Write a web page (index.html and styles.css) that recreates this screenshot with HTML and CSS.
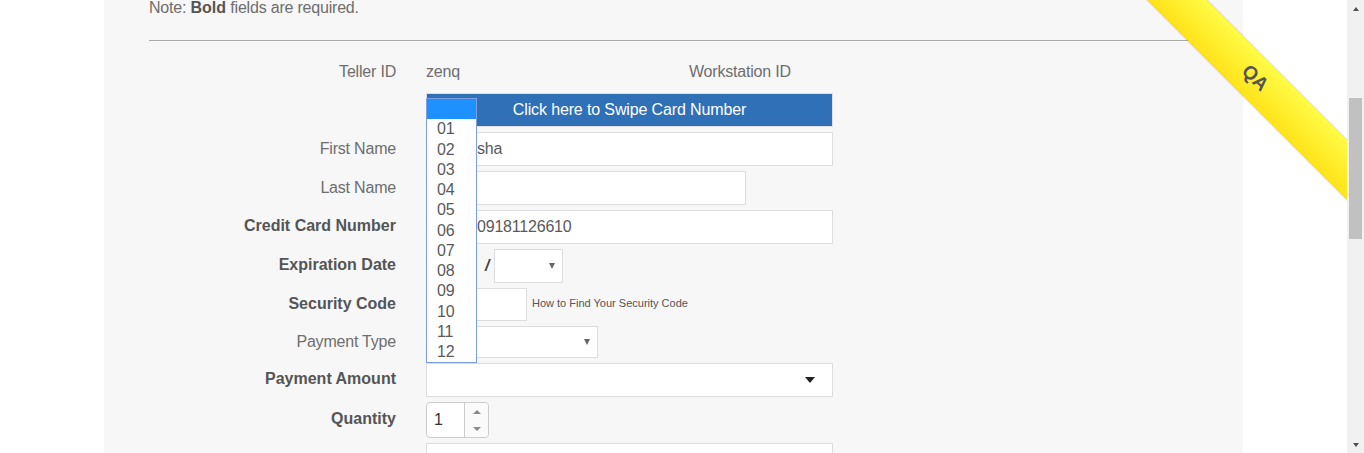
FILE: index.html
```html
<!DOCTYPE html>
<html>
<head>
<meta charset="utf-8">
<link rel="stylesheet" href="styles.css">
</head>
<body>
<div class="page">
  <div class="viewport">
    <div class="container">
      <p class="note">Note: <b>Bold</b> fields are required.</p>
      <div class="rule"></div>
      <div class="form">
        <div class="row row-teller">
          <div class="label">Teller ID</div>
          <div class="field teller-field"><span class="teller-val">zenq</span><span class="ws-label">Workstation ID</span></div>
        </div>
        <div class="row row-swipe">
          <div class="label"></div>
          <div class="field"><div class="swipe">Click here to Swipe Card Number</div></div>
        </div>
        <div class="row">
          <div class="label">First Name</div>
          <div class="field"><div class="input w-full covered">sha</div></div>
        </div>
        <div class="row">
          <div class="label">Last Name</div>
          <div class="field"><div class="input w-last"></div></div>
        </div>
        <div class="row">
          <div class="label bold">Credit Card Number</div>
          <div class="field"><div class="input w-full covered">09181126610</div></div>
        </div>
        <div class="row">
          <div class="label bold">Expiration Date</div>
          <div class="field exp-field">
            <div class="month-wrap">
              <div class="input month"></div>
              <div class="dropdown">
                <div class="opt sel"></div>
                <div class="opt">01</div>
                <div class="opt">02</div>
                <div class="opt">03</div>
                <div class="opt">04</div>
                <div class="opt">05</div>
                <div class="opt">06</div>
                <div class="opt">07</div>
                <div class="opt">08</div>
                <div class="opt">09</div>
                <div class="opt">10</div>
                <div class="opt">11</div>
                <div class="opt">12</div>
              </div>
            </div>
            <span class="slash">/</span>
            <div class="input select year"><span class="tri"></span></div>
          </div>
        </div>
        <div class="row row-sec">
          <div class="label bold">Security Code</div>
          <div class="field sec-field"><div class="input sec"></div><span class="help">How to Find Your Security Code</span></div>
        </div>
        <div class="row row-ptype">
          <div class="label">Payment Type</div>
          <div class="field"><div class="input select ptype"><span class="tri"></span></div></div>
        </div>
        <div class="row">
          <div class="label bold">Payment Amount</div>
          <div class="field"><div class="input select w-full amount"><span class="tri big"></span></div></div>
        </div>
        <div class="row row-qty">
          <div class="label bold">Quantity</div>
          <div class="field">
            <div class="qty">
              <div class="qty-val">1</div>
              <div class="spin">
                <div class="spin-half"><span class="up"></span></div>
                <div class="spin-half"><span class="down"></span></div>
              </div>
            </div>
          </div>
        </div>
        <div class="row">
          <div class="label"></div>
          <div class="field"><div class="input w-full"></div></div>
        </div>
      </div>
    </div>
    <div class="ribbon">QA</div>
  </div>
  <div class="scrollbar">
    <div class="sb-btn"><span class="sb-up"></span></div>
    <div class="sb-track"><div class="sb-thumb"></div></div>
    <div class="sb-btn"><span class="sb-down"></span></div>
  </div>
</div>
</body>
</html>
```

FILE: styles.css
```css
html, body {
  margin: 0;
  padding: 0;
  height: 453px;
  overflow: hidden;
  background: #fff;
  font-family: "Liberation Sans", Arial, sans-serif;
  font-size: 16px;
  color: #6e6e6e;
  letter-spacing: -0.2px;
}

.page {
  display: flex;
  height: 453px;
}

.viewport {
  flex: 1;
  position: relative;
  overflow: hidden;
}

.container {
  width: 1139px;
  height: 100%;
  margin: 0 auto;
  padding: 0 45px;
  box-sizing: border-box;
  background: #f7f7f7;
}

.note {
  margin: 0;
  line-height: 16px;
  color: #6e6e6e;
}
.note b {
  color: #555;
  letter-spacing: 0;
}

.rule {
  margin-top: 24px;
  border-top: 1px solid #aaa;
}

.row {
  display: grid;
  grid-template-columns: 247px 1fr;
  column-gap: 30px;
  margin-top: 5px;
  height: 34px;
}

.label {
  align-self: center;
  text-align: right;
  line-height: 20px;
  color: #6e6e6e;
}
.label.bold {
  font-weight: bold;
  color: #555;
  letter-spacing: 0;
  margin-top: -2px;
}

.field {
  display: flex;
  align-items: center;
}

.row-teller {
  margin-top: 19px;
  height: 24px;
}
.teller-field {
  line-height: 24px;
}
.teller-val {
  width: 263px;
}

.row-swipe {
  margin-top: 9px;
}
.swipe {
  width: 407px;
  height: 34px;
  box-sizing: border-box;
  border: 1px solid #ddd;
  background: #2f70b7;
  color: #fff;
  letter-spacing: -0.13px;
  display: flex;
  align-items: center;
  justify-content: center;
}

.input {
  height: 34px;
  box-sizing: border-box;
  border: 1px solid #ddd;
  background: #fff;
  padding: 0 12px;
  display: flex;
  align-items: center;
  color: #5a5a5a;
}
.input.covered {
  padding-left: 50px;
}

.w-full { width: 407px; }
.w-last { width: 320px; }

.select {
  justify-content: flex-end;
  padding: 0 7px 0 12px;
}
.tri {
  width: 0;
  height: 0;
  border-left: 3.5px solid transparent;
  border-right: 3.5px solid transparent;
  border-top: 6px solid #666;
}
.tri.big {
  border-left-width: 5.5px;
  border-right-width: 5.5px;
  border-top-width: 6px;
  border-top-color: #222;
  margin-right: 10px;
}

.month-wrap {
  position: relative;
}
.month {
  width: 51px;
  border-color: #7b9ee0;
}
.slash {
  width: 17px;
  padding-left: 3px;
  box-sizing: border-box;
  text-align: center;
  color: #444;
  font-style: italic;
  font-weight: bold;
}
.year {
  width: 69px;
}

.dropdown {
  position: absolute;
  top: -151px;
  left: 0;
  width: 51px;
  box-sizing: border-box;
  border: 1px solid #7b9ee0;
  background: #fff;
  z-index: 5;
}
.opt {
  height: 20.25px;
  line-height: 20px;
  padding-left: 10px;
  color: #5a5a5a;
}
.opt.sel {
  background: #1e90ff;
}

.row-sec { height: 33px; }
.sec {
  width: 101px;
  height: 33px;
}
.help {
  margin-left: 5px;
  margin-top: -3px;
  font-size: 11px;
  letter-spacing: 0;
  color: #555;
}

.row-ptype { height: 32px; }
.ptype {
  width: 172px;
  height: 32px;
}

.row-qty { height: 36px; }
.qty {
  width: 63px;
  height: 36px;
  box-sizing: border-box;
  border: 1px solid #ccc;
  border-radius: 4px;
  background: #fff;
  display: flex;
}
.qty-val {
  width: 37px;
  box-sizing: border-box;
  padding-left: 7px;
  display: flex;
  align-items: center;
  color: #333;
}
.spin {
  flex: 1;
  border-left: 1px solid #ccc;
  display: flex;
  flex-direction: column;
  background: #fafafa;
  border-radius: 0 4px 4px 0;
}
.spin-half {
  flex: 1;
  display: flex;
  align-items: center;
  justify-content: center;
}
.up {
  width: 0;
  height: 0;
  border-left: 4px solid transparent;
  border-right: 4px solid transparent;
  border-bottom: 4px solid #888;
}
.down {
  width: 0;
  height: 0;
  border-left: 4px solid transparent;
  border-right: 4px solid transparent;
  border-top: 4px solid #888;
}

.ribbon {
  position: absolute;
  left: 1075px;
  top: 56.5px;
  width: 360px;
  height: 42px;
  transform: rotate(45deg);
  background: linear-gradient(to bottom, #fffc46 0%, #ffef30 50%, #ffe31b 100%);
  box-shadow: 0 0 1.5px rgba(60, 80, 160, 0.55);
  display: flex;
  align-items: center;
  justify-content: center;
  font-weight: bold;
  font-size: 19px;
  letter-spacing: 0;
  color: #555;
  z-index: 10;
}

.scrollbar {
  width: 17px;
  background: #f1f1f1;
  display: flex;
  flex-direction: column;
}
.sb-btn {
  height: 17px;
  display: flex;
  align-items: center;
  justify-content: center;
}
.sb-up {
  width: 0;
  height: 0;
  border-left: 3.5px solid transparent;
  border-right: 3.5px solid transparent;
  border-bottom: 4px solid #505050;
}
.sb-down {
  width: 0;
  height: 0;
  border-left: 3.5px solid transparent;
  border-right: 3.5px solid transparent;
  border-top: 4px solid #505050;
}
.sb-track {
  flex: 1;
}
.sb-thumb {
  margin: 81px 2px 0;
  height: 141px;
  background: #c1c1c1;
}
```
